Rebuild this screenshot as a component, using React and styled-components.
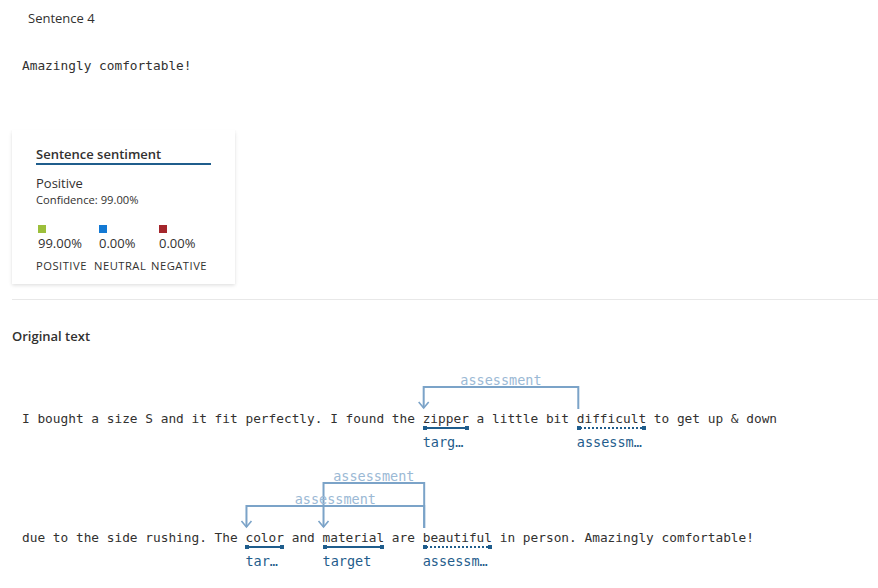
import React from 'react'
import styled, { createGlobalStyle } from 'styled-components'

const CW = 12.8 * 0.602
const ARC = '#7ba3c8'
const ARC_TEXT = '#9bb9d5'
const DARK = '#1f5d8c'

const lines = [
  {
    levels: 1,
    tokens: [
      { t: 'I bought a size S and it fit perfectly. I found the ' },
      { t: 'zipper', kind: 'target', label: 'target', id: 'zipper' },
      { t: ' a little bit ' },
      { t: 'difficult', kind: 'assessment', label: 'assessment', id: 'difficult' },
      { t: ' to get up & down' },
    ],
    arcs: [{ from: 'difficult', to: 'zipper', level: 1 }],
  },
  {
    levels: 2,
    tokens: [
      { t: 'due to the side rushing. The ' },
      { t: 'color', kind: 'target', label: 'target', id: 'color' },
      { t: ' and ' },
      { t: 'material', kind: 'target', label: 'target', id: 'material' },
      { t: ' are ' },
      { t: 'beautiful', kind: 'assessment', label: 'assessment', id: 'beautiful' },
      { t: ' in person. Amazingly comfortable!' },
    ],
    arcs: [
      { from: 'beautiful', to: 'material', level: 2 },
      { from: 'beautiful', to: 'color', level: 1 },
    ],
  },
]

const scores = [
  { color: '#9cbf3b', value: '99.00%', name: 'POSITIVE', width: 58, inset: 2 },
  { color: '#1379d4', value: '0.00%', name: 'NEUTRAL', width: 57, inset: 5 },
  { color: '#a4262c', value: '0.00%', name: 'NEGATIVE', width: 60, inset: 8 },
]

// space above a line for its arcs, one 23px level per nested arc
function padTop(levels) {
  return 24 + 23 * levels
}

function Arcs({ line }) {
  const pt = padTop(line.levels)
  const starts = {}
  let i = 0
  line.tokens.forEach((tk) => {
    if (tk.id) starts[tk.id] = i
    i += tk.t.length
  })
  return (
    <ArcLayer width="860" height={pt}>
      {line.arcs.map((a, k) => {
        const x1 = 10 + starts[a.from] * CW + 1.5
        const x2 = 10 + starts[a.to] * CW + 1
        const y = pt - 22 - 23 * (a.level - 1)
        return (
          <g key={k}>
            <path d={`M${x1} ${pt} V${y} H${x2} V${pt - 1}`} fill="none" stroke={ARC} strokeWidth="2" />
            <path d={`M${x2 - 5} ${pt - 7} L${x2} ${pt - 1} L${x2 + 5} ${pt - 7}`} fill="none" stroke={ARC} strokeWidth="1.6" />
            <ArcLabel x={(x1 + x2) / 2} y={y - 2.5} textAnchor="middle">assessment</ArcLabel>
          </g>
        )
      })}
    </ArcLayer>
  )
}

function App() {
  return (
    <Page>
      <GlobalStyle />
      <Heading>Sentence 4</Heading>
      <Mono>Amazingly comfortable!</Mono>
      <Card>
        <CardTitle>Sentence sentiment</CardTitle>
        <Big>Positive</Big>
        <Small>Confidence: 99.00%</Small>
        <Scores>
          {scores.map((s) => (
            <Score key={s.name} $width={s.width}>
              <Swatch color={s.color} $inset={s.inset} />
              <Value $inset={s.inset}>{s.value}</Value>
              <Caption>{s.name}</Caption>
            </Score>
          ))}
        </Scores>
      </Card>
      <Divider />
      <SectionTitle>Original text</SectionTitle>
      {lines.map((line, n) => (
        <LineBlock key={n} $pt={padTop(line.levels)} $first={n === 0}>
          <Arcs line={line} />
          <Row>
            {line.tokens.map((tk, k) =>
              tk.kind ? (
                <Token key={k}>
                  {tk.t}
                  <Underline $dotted={tk.kind === 'assessment'} />
                  <TokenLabel>{tk.label}</TokenLabel>
                </Token>
              ) : (
                <span key={k}>{tk.t}</span>
              )
            )}
          </Row>
        </LineBlock>
      ))}
    </Page>
  )
}

export default App

const GlobalStyle = createGlobalStyle`
  body {
    margin: 0;
    background: #fff;
    color: #323130;
    font-family: "Open Sans", "Noto Sans", sans-serif;
  }
`

const Page = styled.div`
  padding: 9px 0 0 12px;
`

const Heading = styled.div`
  padding-left: 16px;
  font-size: 13px;
  line-height: 18px;
`

const Mono = styled.div`
  margin-top: 29px;
  padding-left: 10px;
  font-family: "DejaVu Sans Mono", "Liberation Mono", monospace;
  font-size: 12.8px;
  line-height: 20px;
  white-space: pre;
`

const Card = styled.div`
  margin-top: 54px;
  width: 223px;
  box-sizing: border-box;
  padding: 16px 24px 11px;
  background: #fff;
  box-shadow: 0 1.6px 3.6px rgba(0, 0, 0, 0.13), 0 0.3px 0.9px rgba(0, 0, 0, 0.1);
`

const CardTitle = styled.div`
  font-size: 13px;
  font-weight: 600;
  line-height: 17px;
  border-bottom: 2px solid ${DARK};
`

const Big = styled.div`
  margin-top: 9px;
  font-size: 13px;
  line-height: 18px;
`

const Small = styled.div`
  margin-top: 1px;
  font-size: 11.2px;
  line-height: 14px;
`

const Scores = styled.div`
  display: flex;
  margin-top: 18px;
`

const Score = styled.div`
  display: flex;
  flex-direction: column;
  width: ${(p) => p.$width}px;
`

const Swatch = styled.div`
  width: 8px;
  height: 8px;
  margin-left: ${(p) => p.$inset}px;
  background: ${(p) => p.color};
`

const Value = styled.div`
  margin: 1px 0 0 ${(p) => p.$inset}px;
  font-size: 13px;
  line-height: 18px;
`

const Caption = styled.div`
  margin-top: 7px;
  font-size: 11.2px;
  letter-spacing: 0.5px;
  line-height: 14px;
  white-space: nowrap;
`

const Divider = styled.div`
  margin-top: 15px;
  height: 1px;
  background: #e8e8e8;
`

const SectionTitle = styled.div`
  margin-top: 27px;
  font-size: 13px;
  font-weight: 600;
  line-height: 18px;
`

const LineBlock = styled.div`
  position: relative;
  margin-top: ${(p) => (p.$first ? 17 : 0)}px;
  padding: ${(p) => p.$pt}px 0 29px 10px;
`

const ArcLayer = styled.svg`
  position: absolute;
  top: 0;
  left: 0;
  overflow: visible;
`

const ArcLabel = styled.text`
  font-family: "DejaVu Sans Mono", "Liberation Mono", monospace;
  font-size: 13.5px;
  fill: ${ARC_TEXT};
`

const Row = styled.div`
  font-family: "DejaVu Sans Mono", "Liberation Mono", monospace;
  font-size: 12.8px;
  line-height: 20px;
  white-space: pre;
`

const Token = styled.span`
  position: relative;
  display: inline-block;
`

const Underline = styled.span`
  position: absolute;
  left: 0;
  right: 0;
  top: 18px;
  height: 0;
  border-top: 2px ${(p) => (p.$dotted ? 'dotted' : 'solid')} ${DARK};

  &::before,
  &::after {
    content: '';
    position: absolute;
    top: -3px;
    width: 4px;
    height: 4px;
    background: ${DARK};
  }
  &::before {
    left: 0;
  }
  &::after {
    right: 0;
  }
`

const TokenLabel = styled.span`
  position: absolute;
  left: 0;
  top: 24px;
  width: 100%;
  overflow: hidden;
  text-overflow: ellipsis;
  white-space: nowrap;
  font-size: 13.5px;
  line-height: 18px;
  color: ${DARK};
`
